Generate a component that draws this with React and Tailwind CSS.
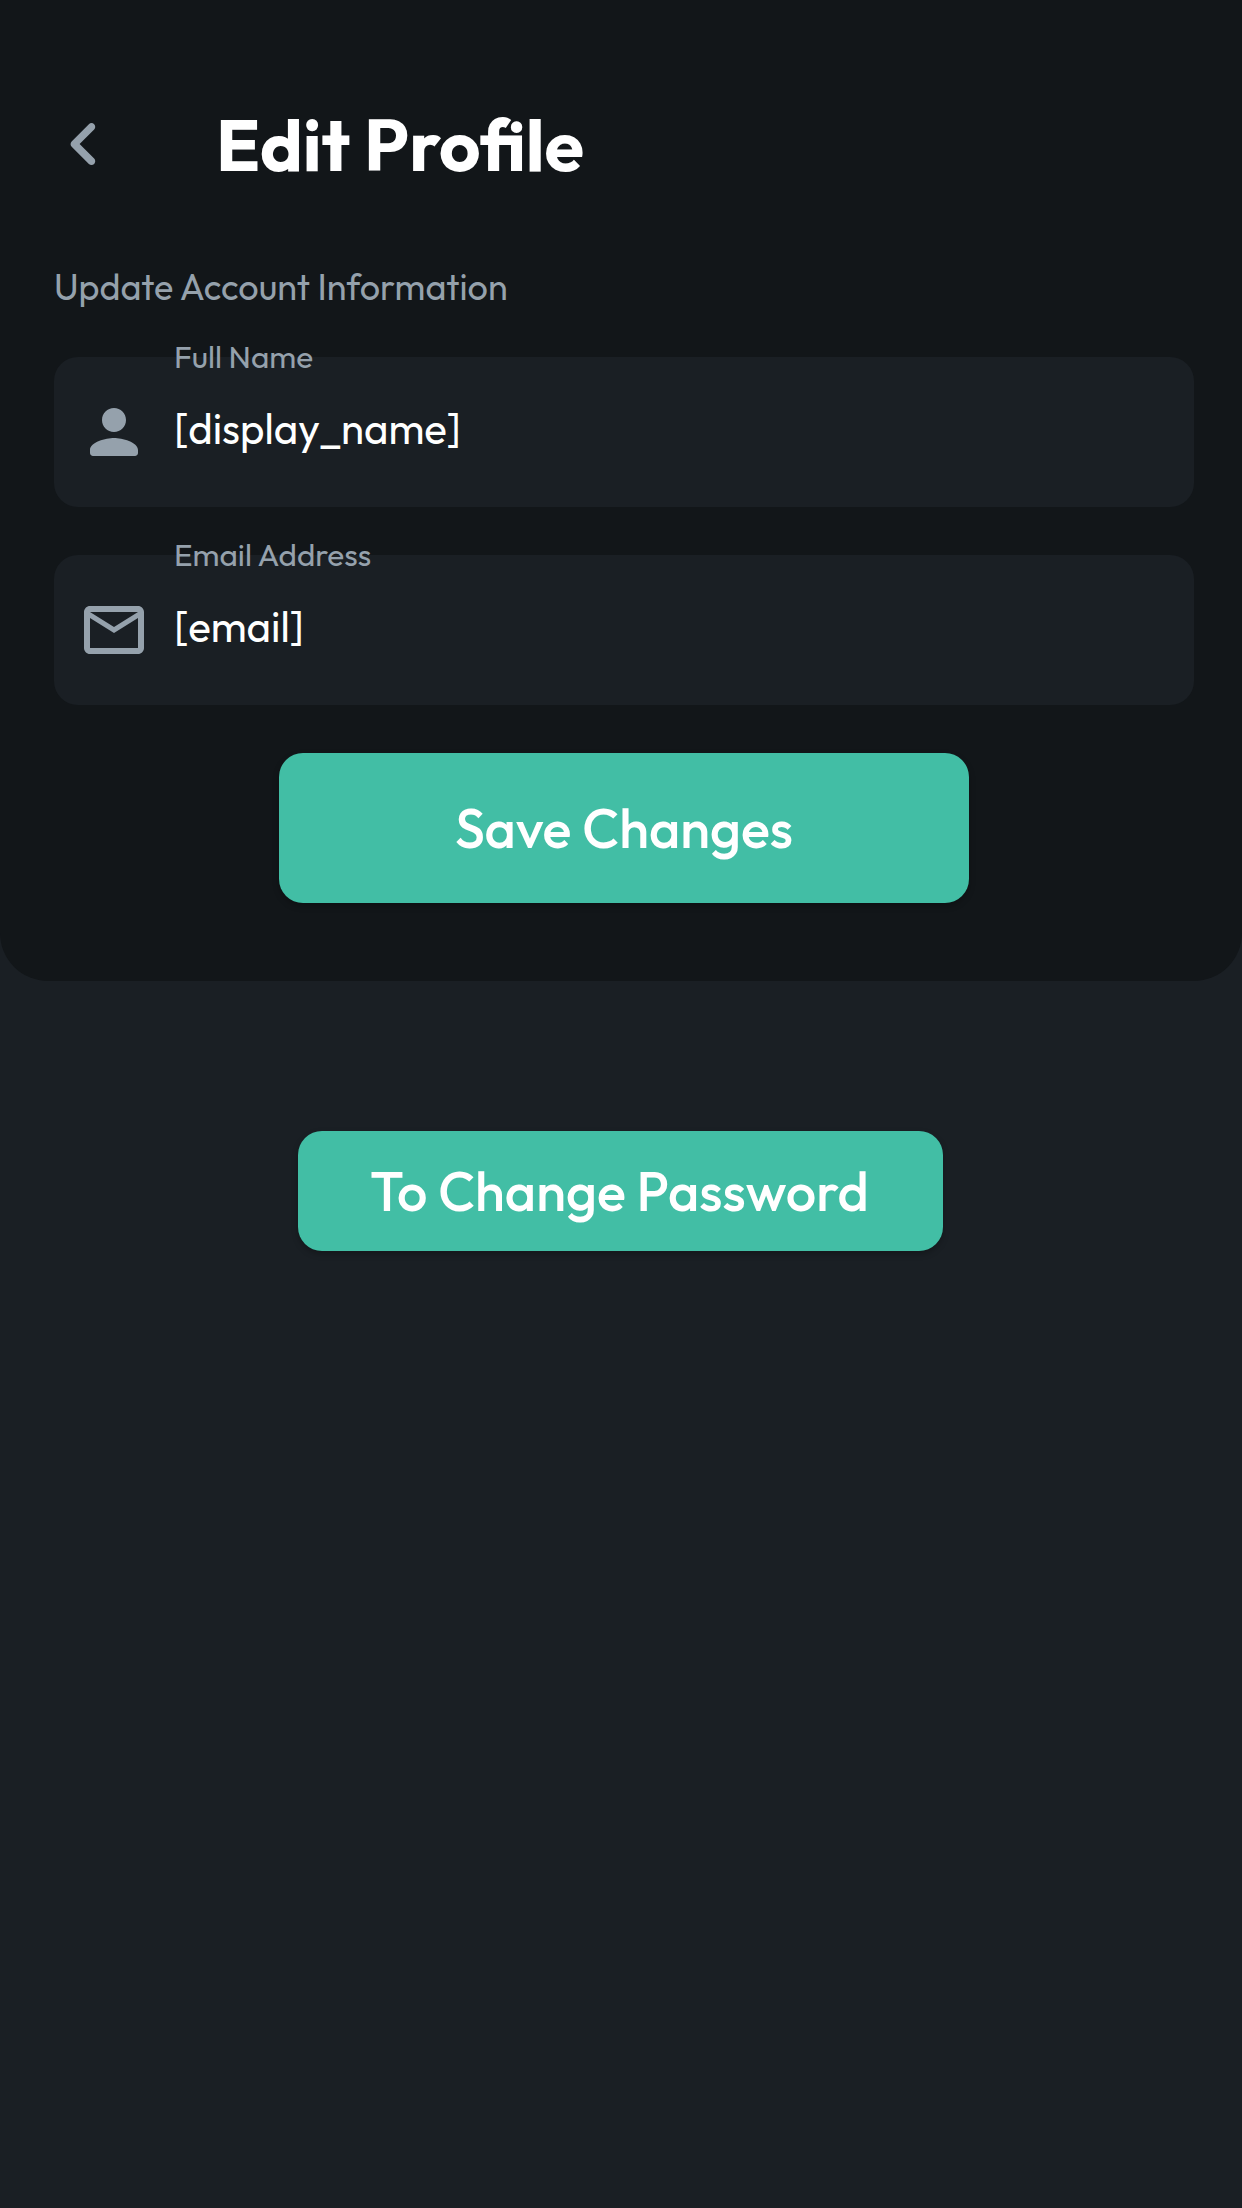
function ChevronLeft() {
  return (
    <svg viewBox="0 0 24 24" fill="currentColor" className="size-[90px]">
      <path d="M14.71 6.71c-.39-.39-1.02-.39-1.41 0L8.71 11.3c-.39.39-.39 1.02 0 1.41l4.59 4.59c.39.39 1.02.39 1.41 0 .39-.39.39-1.02 0-1.41L10.83 12l3.88-3.88c.39-.39.38-1.03 0-1.41z" />
    </svg>
  );
}

function Person() {
  return (
    <svg viewBox="0 0 24 24" fill="currentColor" className="size-[72px]">
      <path d="M12 12c2.21 0 4-1.79 4-4s-1.79-4-4-4-4 1.79-4 4 1.79 4 4 4zm0 2c-2.67 0-8 1.34-8 4v1c0 .55.45 1 1 1h14c.55 0 1-.45 1-1v-1c0-2.66-5.33-4-8-4z" />
    </svg>
  );
}

function Mail() {
  return (
    <svg viewBox="0 0 24 24" fill="currentColor" className="size-[72px]">
      <path d="M22 6c0-1.1-.9-2-2-2H4c-1.1 0-2 .9-2 2v12c0 1.1.9 2 2 2h16c1.1 0 2-.9 2-2V6zm-2 0l-8 5-8-5h16zm0 12H4V8l8 5 8-5v10z" />
    </svg>
  );
}

function Field({ icon, label, value }) {
  return (
    <div className="flex h-[150px] rounded-3xl bg-[#1a1f24] pl-6">
      <div className="mt-[39px] h-[72px] w-24 text-[#95a1ac]">{icon}</div>
      <div className="-mt-[19px] flex flex-col whitespace-nowrap">
        <span className="text-[31.5px] leading-9 text-[#95a1ac]">{label}</span>
        <span className="mt-[30px] text-[42px] leading-[50px] text-white">{value}</span>
      </div>
    </div>
  );
}

export default function App() {
  return (
    <div className="flex min-h-[2208px] w-[1242px] flex-col items-center bg-[#1a1f24] font-[Outfit,Lato,sans-serif]">
      <section className="flex h-[981px] w-full flex-col rounded-b-[48px] bg-[#121619] pt-[99px] pr-12 pl-[54px]">
        <header className="-ml-[15px] flex h-[90px] items-center">
          <button className="text-[#95a1ac]" aria-label="Back">
            <ChevronLeft />
          </button>
          <h1 className="ml-[87px] pt-px text-[72px] leading-[90px] font-bold whitespace-nowrap text-white">
            Edit Profile
          </h1>
        </header>
        <p className="mt-[76px] text-4xl leading-[44px] text-[#95a1ac]">Update Account Information</p>
        <div className="mt-12 flex flex-col gap-12">
          <Field icon={<Person />} label="Full Name" value="[display_name]" />
          <Field icon={<Mail />} label="Email Address" value="[email]" />
        </div>
        <button className="mt-12 h-[150px] w-[690px] self-center rounded-3xl bg-[#42bea5] text-[54px] font-medium text-white shadow-[0_3px_6px_rgba(0,0,0,0.25)]">
          Save Changes
        </button>
      </section>
      <button className="mt-[150px] mr-px h-[120px] w-[645px] rounded-3xl bg-[#42bea5] pr-0.5 text-[54px] font-medium text-white shadow-[0_3px_6px_rgba(0,0,0,0.25)]">
        To Change Password
      </button>
    </div>
  );
}
